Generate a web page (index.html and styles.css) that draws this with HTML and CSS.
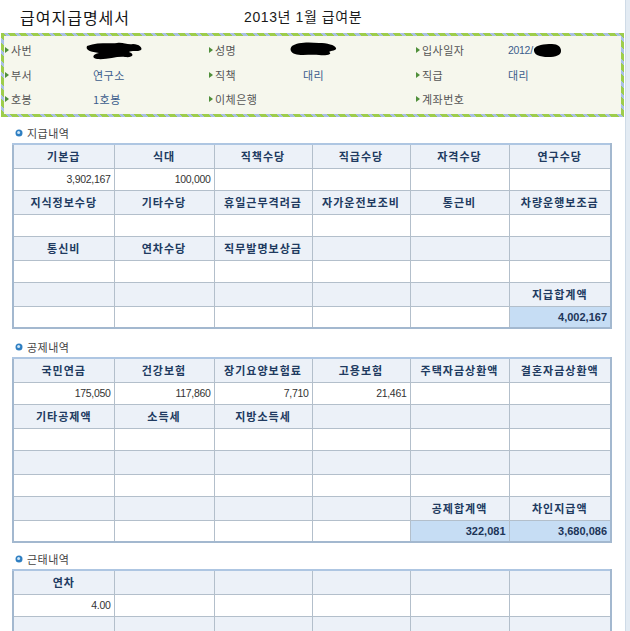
FILE: index.html
```html
<!DOCTYPE html>
<html lang="ko">
<head>
<meta charset="utf-8">
<title>급여지급명세서</title>
<link rel="stylesheet" href="styles.css">
</head>
<body>
<div class="frame">
  <div class="main">
    <div class="title-row">
      <h1 class="title">급여지급명세서</h1>
      <div class="period">2013년 1월 급여분</div>
    </div>

    <div class="info">
      <div class="lbl"><i class="tri"></i>사번</div>
      <div class="val"><svg class="blob blob-a" width="64" height="22" viewBox="0 0 64 22"><path d="M4 6 C14 2 26 4 34 3 C40 2 44 5 50 4 C56 4 60 8 58 10 C55 12 48 10 46 12 C52 14 50 18 42 17 C34 16 24 20 14 19 C8 18 10 14 16 13 C8 12 2 10 4 6 Z" fill="#000"/></svg></div>
      <div class="lbl"><i class="tri"></i>성명</div>
      <div class="val"><svg class="blob blob-b" width="50" height="16" viewBox="0 0 50 16"><path d="M3 5 C8 1 20 1 30 2 C38 2 46 4 47 7 C48 10 42 9 40 11 C44 13 38 15 30 14 C22 13 12 15 6 13 C2 12 0 8 3 5 Z" fill="#000"/></svg></div>
      <div class="lbl"><i class="tri"></i>입사일자</div>
      <div class="val">2012/<svg class="blob blob-c" width="30" height="15" viewBox="0 0 30 15"><path d="M2 6 C4 2 12 1 20 1 C26 1 29 4 29 8 C29 12 24 14 16 14 C8 14 1 12 2 6 Z" fill="#000"/></svg></div>

      <div class="lbl"><i class="tri"></i>부서</div>
      <div class="val">연구소</div>
      <div class="lbl"><i class="tri"></i>직책</div>
      <div class="val">대리</div>
      <div class="lbl"><i class="tri"></i>직급</div>
      <div class="val">대리</div>

      <div class="lbl"><i class="tri"></i>호봉</div>
      <div class="val">1호봉</div>
      <div class="lbl"><i class="tri"></i>이체은행</div>
      <div class="val"></div>
      <div class="lbl"><i class="tri"></i>계좌번호</div>
      <div class="val"></div>
    </div>

    <h2 class="sec"><svg class="dot" width="8" height="8" viewBox="0 0 8 8"><circle cx="4" cy="4" r="3.5" fill="#2f7fc2"/><circle cx="3.6" cy="3.6" r="1.5" fill="#cfe6f7"/></svg>지급내역</h2>
    <table class="grid">
      <colgroup><col class="c1"><col class="c2"><col class="c3"><col class="c4"><col class="c5"><col class="c6"></colgroup>
      <tr class="h"><th>기본급</th><th>식대</th><th>직책수당</th><th>직급수당</th><th>자격수당</th><th>연구수당</th></tr>
      <tr class="d"><td>3,902,167</td><td>100,000</td><td></td><td></td><td></td><td></td></tr>
      <tr class="h"><th>지식정보수당</th><th>기타수당</th><th>휴일근무격려금</th><th>자가운전보조비</th><th>통근비</th><th>차량운행보조금</th></tr>
      <tr class="d"><td></td><td></td><td></td><td></td><td></td><td></td></tr>
      <tr class="h"><th>통신비</th><th>연차수당</th><th>직무발명보상금</th><th></th><th></th><th></th></tr>
      <tr class="d"><td></td><td></td><td></td><td></td><td></td><td></td></tr>
      <tr class="h"><th></th><th></th><th></th><th></th><th></th><th>지급합계액</th></tr>
      <tr class="d"><td></td><td></td><td></td><td></td><td></td><td class="sum">4,002,167</td></tr>
    </table>

    <h2 class="sec sec-gap"><svg class="dot" width="8" height="8" viewBox="0 0 8 8"><circle cx="4" cy="4" r="3.5" fill="#2f7fc2"/><circle cx="3.6" cy="3.6" r="1.5" fill="#cfe6f7"/></svg>공제내역</h2>
    <table class="grid">
      <colgroup><col class="c1"><col class="c2"><col class="c3"><col class="c4"><col class="c5"><col class="c6"></colgroup>
      <tr class="h"><th>국민연금</th><th>건강보험</th><th>장기요양보험료</th><th>고용보험</th><th>주택자금상환액</th><th>결혼자금상환액</th></tr>
      <tr class="d"><td>175,050</td><td>117,860</td><td>7,710</td><td>21,461</td><td></td><td></td></tr>
      <tr class="h"><th>기타공제액</th><th>소득세</th><th>지방소득세</th><th></th><th></th><th></th></tr>
      <tr class="d"><td></td><td></td><td></td><td></td><td></td><td></td></tr>
      <tr class="h"><th></th><th></th><th></th><th></th><th></th><th></th></tr>
      <tr class="d"><td></td><td></td><td></td><td></td><td></td><td></td></tr>
      <tr class="h"><th></th><th></th><th></th><th></th><th>공제합계액</th><th>차인지급액</th></tr>
      <tr class="d"><td></td><td></td><td></td><td></td><td class="sum">322,081</td><td class="sum">3,680,086</td></tr>
    </table>

    <h2 class="sec sec-gap2"><svg class="dot" width="8" height="8" viewBox="0 0 8 8"><circle cx="4" cy="4" r="3.5" fill="#2f7fc2"/><circle cx="3.6" cy="3.6" r="1.5" fill="#cfe6f7"/></svg>근태내역</h2>
    <table class="grid">
      <colgroup><col class="c1"><col class="c2"><col class="c3"><col class="c4"><col class="c5"><col class="c6"></colgroup>
      <tr class="h"><th>연차</th><th></th><th></th><th></th><th></th><th></th></tr>
      <tr class="d"><td>4.00</td><td></td><td></td><td></td><td></td><td></td></tr>
      <tr class="h"><th></th><th></th><th></th><th></th><th></th><th></th></tr>
      <tr class="d"><td></td><td></td><td></td><td></td><td></td><td></td></tr>
    </table>
  </div>
  <div class="edge"></div>
</div>
</body>
</html>
```
FILE: styles.css
```css
html, body {
  margin: 0;
  padding: 0;
  background: #fff;
}
body {
  font-family: "Noto Sans CJK KR", "Noto Sans", sans-serif;
  color: #333;
  overflow: hidden;
}
.frame {
  display: flex;
  min-height: 631px;
}
.main {
  width: 625px;
  flex: none;
}
.edge {
  flex: 1;
  background: #e3ebf3;
  border-left: 1px solid #cfdbe7;
}

.title-row {
  display: flex;
  align-items: center;
  height: 33px;
  padding-left: 20px;
  box-sizing: border-box;
}
.title {
  margin: 0;
  width: 224px;
  font-size: 16px;
  font-weight: 400;
  color: #151515;
  line-height: 20px;
  letter-spacing: 1px;
}
.period {
  font-size: 14px;
  color: #1a1a1a;
  line-height: 20px;
  letter-spacing: 0.6px;
  font-family: "Liberation Sans", "Noto Sans CJK KR", sans-serif;
}

.info {
  margin-left: 1px;
  width: 623px;
  height: 84px;
  box-sizing: border-box;
  border: 3px solid #9ccc4c;
  border-image: repeating-linear-gradient(45deg, #9dcd4b 0 5px, #a9bfe4 5px 8px) 3;
  background: #f6f7ed;
  padding: 2px 0 0 1px;
  display: grid;
  grid-template-columns: 88px 116px 94px 113px 92px 1fr;
  grid-auto-rows: 24.5px;
  align-items: center;
  font-size: 11px;
}
.lbl {
  display: flex;
  align-items: center;
  color: #555;
  letter-spacing: 0.5px;
}
.tri {
  display: inline-block;
  width: 0;
  height: 0;
  border-left: 4px solid #4f8f3a;
  border-top: 3px solid transparent;
  border-bottom: 3px solid transparent;
  margin-right: 2px;
}
.val {
  display: flex;
  align-items: center;
  color: #3c5d8c;
  letter-spacing: 0.5px;
}
.blob { display: block; }
.blob-a { margin-left: -10px; margin-top: 2px; }
.blob-b { margin-left: -14px; margin-top: -2px; }
.blob-c { margin-left: -1px; }
.val:nth-child(6) { font-family: "Liberation Sans", sans-serif; font-size: 10.5px; letter-spacing: -0.3px; }

.sec {
  margin: 8px 0 2px 0;
  padding-left: 15px;
  height: 16px;
  display: flex;
  align-items: center;
  font-size: 11px;
  font-weight: 400;
  color: #444;
  letter-spacing: 0.5px;
}
.sec-gap { margin-top: 10px; }
.sec-gap2 { margin-top: 8px; margin-bottom: 2px; }
.dot { margin-right: 4px; }

.grid {
  margin-left: 12px;
  width: 598px;
  border-collapse: collapse;
  table-layout: fixed;
  border: 2px solid #a3b8cf;
  border-top-color: #aec6e2;
}
.c1 { width: 101px; }
.c2 { width: 100px; }
.c3 { width: 98px; }
.c4 { width: 98px; }
.c5 { width: 99px; }
.c6 { width: 102px; }
.grid th, .grid td {
  border: 1px solid #b3bfcb;
  padding: 0;
}
.grid tr.h { height: 24px; }
.grid tr.d { height: 22px; }
.grid th {
  background: #ecf1f8;
  color: #203a60;
  font-size: 11px;
  font-weight: 700;
  letter-spacing: 1px;
  text-align: center;
  white-space: nowrap;
}
.grid td {
  background: #fff;
  text-align: right;
  padding-right: 3px;
  font-family: "Liberation Sans", sans-serif;
  font-size: 10.5px;
  letter-spacing: -0.3px;
  color: #333;
}
.grid td.sum {
  background: #c6ddf4;
  color: #1d3558;
  font-weight: 700;
  font-size: 11px;
  letter-spacing: 0;
}
```
